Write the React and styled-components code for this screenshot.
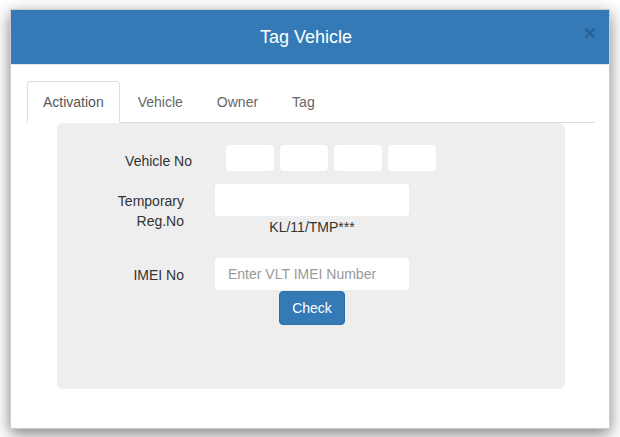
import React, { useState } from 'react';
import styled, { createGlobalStyle } from 'styled-components';

const GlobalStyle = createGlobalStyle`
  html, body {
    margin: 0;
    padding: 0;
    background: #fff;
    font-family: "Liberation Sans", Arial, Helvetica, sans-serif;
    font-size: 14px;
    color: #333;
  }
  * { box-sizing: border-box; }
`;

const Page = styled.div`
  padding: 9px 10px;
`;

const Modal = styled.div`
  width: 600px;
  background: #fff;
  border: 1px solid rgba(0, 0, 0, 0.2);
  box-shadow: 0 5px 15px rgba(0, 0, 0, 0.5);
`;

const Header = styled.div`
  position: relative;
  height: 55px;
  background: #337ab7;
  border-bottom: 1px solid #e5e5e5;
  display: flex;
  align-items: center;
  justify-content: center;
  padding-right: 8px;
`;

const Title = styled.h4`
  margin: 0;
  color: #fff;
  font-size: 18px;
  font-weight: 400;
  line-height: 20px;
`;

const Close = styled.button`
  position: absolute;
  right: 13px;
  top: 12px;
  border: 0;
  background: transparent;
  padding: 0;
  font-family: "Liberation Sans", Arial, sans-serif;
  font-size: 21px;
  font-weight: 700;
  line-height: 1;
  color: #000;
  opacity: 0.2;
  cursor: pointer;
`;

const Body = styled.div`
  padding: 16px 14px 39px 16px;
`;

const Tabs = styled.ul`
  list-style: none;
  margin: 0;
  padding: 0;
  display: flex;
  border-bottom: 1px solid #ddd;
`;

const Tab = styled.li`
  margin-right: 2px;
  margin-bottom: -1px;
  padding: 10px 15px;
  line-height: 20px;
  border: 1px solid ${(p) => (p.$active ? '#ddd' : 'transparent')};
  border-bottom-color: ${(p) => (p.$active ? '#fff' : 'transparent')};
  border-radius: 4px 4px 0 0;
  background: ${(p) => (p.$active ? '#fff' : 'transparent')};
  color: ${(p) => (p.$active ? '#555' : '#666')};
  cursor: pointer;
`;

const Panel = styled.div`
  margin: 0 30px;
  height: 266px;
  background: #eee;
  border-radius: 6px;
  padding-top: 22px;
`;

const Row = styled.div`
  display: grid;
  grid-template-columns: ${(p) => p.$labelWidth}px 194px;
  column-gap: ${(p) => p.$gap}px;
  margin-bottom: ${(p) => p.$after || 0}px;
`;

const Label = styled.label`
  text-align: right;
  padding-top: ${(p) => p.$top ?? 7}px;
  line-height: 20px;
  color: #333;
`;

const Field = styled.div`
  display: flex;
  flex-direction: column;
  align-items: center;
`;

const Parts = styled.div`
  display: flex;
  gap: 6px;
`;

const Input = styled.input`
  width: ${(p) => p.$w || 194}px;
  height: ${(p) => p.$h || 32}px;
  border: 0;
  border-radius: 4px;
  background: #fff;
  padding: 0 13px;
  font-family: inherit;
  font-size: 14px;
  color: #555;
  outline: none;
  &::placeholder { color: #999; }
`;

const Hint = styled.span`
  line-height: 20px;
  margin-top: 1px;
  color: #333;
`;

const Button = styled.button`
  margin-top: 1px;
  height: 34px;
  padding: 6px 12px;
  font-family: inherit;
  font-size: 14px;
  line-height: 20px;
  color: #fff;
  background: #337ab7;
  border: 1px solid #2e6da4;
  border-radius: 4px;
  cursor: pointer;
`;

const tabs = ['Activation', 'Vehicle', 'Owner', 'Tag'];

export default function App() {
  const [active, setActive] = useState('Activation');

  return (
    <>
      <GlobalStyle />
      <Page>
        <Modal>
          <Header>
            <Title>Tag Vehicle</Title>
            <Close aria-label="Close">×</Close>
          </Header>
          <Body>
            <Tabs>
              {tabs.map((t) => (
                <Tab key={t} $active={t === active} onClick={() => setActive(t)}>
                  {t}
                </Tab>
              ))}
            </Tabs>
            <Panel>
              <Row $labelWidth={135} $gap={34} $after={13}>
                <Label $top={6}>Vehicle No</Label>
                <Parts>
                  <Input $w={48} $h={26} />
                  <Input $w={48} $h={26} />
                  <Input $w={48} $h={26} />
                  <Input $w={48} $h={26} />
                </Parts>
              </Row>
              <Row $labelWidth={127} $gap={31} $after={21}>
                <Label>Temporary<br />Reg.No</Label>
                <Field>
                  <Input />
                  <Hint>KL/11/TMP***</Hint>
                </Field>
              </Row>
              <Row $labelWidth={127} $gap={31}>
                <Label>IMEI No</Label>
                <Field>
                  <Input placeholder="Enter VLT IMEI Number" />
                  <Button>Check</Button>
                </Field>
              </Row>
            </Panel>
          </Body>
        </Modal>
      </Page>
    </>
  );
}
